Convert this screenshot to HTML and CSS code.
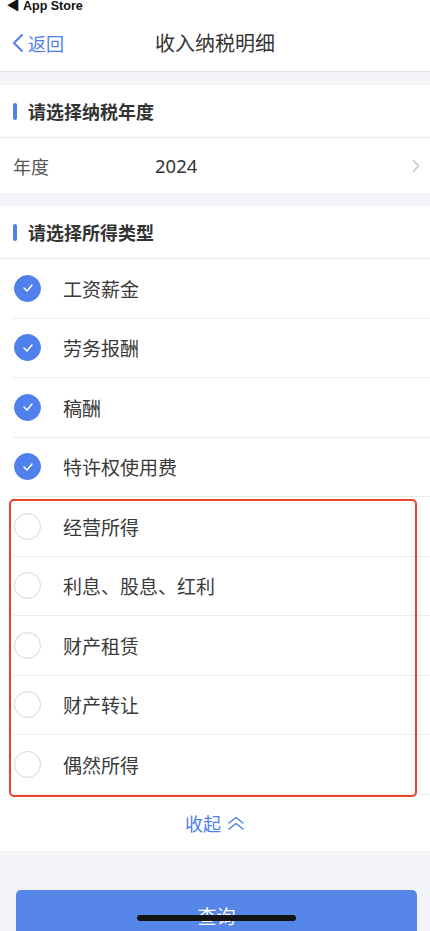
FILE: index.html
```html
<!DOCTYPE html>
<html lang="zh-CN">
<head>
<meta charset="utf-8">
<meta name="viewport" content="width=device-width, initial-scale=1.0">
<title>收入纳税明细</title>
<link rel="stylesheet" href="styles.css">
</head>
<body>
<div class="page">
  <div class="status">&#9664; App Store</div>

  <div class="nav">
    <a class="back">
      <svg width="12" height="20" viewBox="0 0 12 20"><path d="M10 2 L2 10 L10 18" fill="none" stroke="#4f80ec" stroke-width="2" stroke-linecap="round" stroke-linejoin="round"/></svg>
      <span>返回</span>
    </a>
    <div class="nav-title">收入纳税明细</div>
  </div>

  <div class="gap"></div>

  <div class="block">
    <div class="block-head"><i class="bar"></i>请选择纳税年度</div>
    <div class="year-row">
      <span class="year-label">年度</span>
      <span class="year-value">2024</span>
      <svg class="arrow" width="8" height="14" viewBox="0 0 8 14"><path d="M1.5 1.5 L6.5 7 L1.5 12.5" fill="none" stroke="#c9c9cc" stroke-width="1.6" stroke-linecap="round" stroke-linejoin="round"/></svg>
    </div>
  </div>

  <div class="gap"></div>

  <div class="block">
    <div class="block-head"><i class="bar"></i>请选择所得类型</div>
    <ul class="types">
      <li class="type on"><span class="check"><svg width="12" height="10" viewBox="0 0 12 10"><path d="M2 5 L5 8 L10 2" fill="none" stroke="#fff" stroke-width="1.5" stroke-linecap="round" stroke-linejoin="round"/></svg></span>工资薪金</li>
      <li class="type on"><span class="check"><svg width="12" height="10" viewBox="0 0 12 10"><path d="M2 5 L5 8 L10 2" fill="none" stroke="#fff" stroke-width="1.5" stroke-linecap="round" stroke-linejoin="round"/></svg></span>劳务报酬</li>
      <li class="type on"><span class="check"><svg width="12" height="10" viewBox="0 0 12 10"><path d="M2 5 L5 8 L10 2" fill="none" stroke="#fff" stroke-width="1.5" stroke-linecap="round" stroke-linejoin="round"/></svg></span>稿酬</li>
      <li class="type on"><span class="check"><svg width="12" height="10" viewBox="0 0 12 10"><path d="M2 5 L5 8 L10 2" fill="none" stroke="#fff" stroke-width="1.5" stroke-linecap="round" stroke-linejoin="round"/></svg></span>特许权使用费</li>
    </ul>
    <ul class="types marked">
      <li class="type"><span class="check"></span>经营所得</li>
      <li class="type"><span class="check"></span>利息、股息、红利</li>
      <li class="type"><span class="check"></span>财产租赁</li>
      <li class="type"><span class="check"></span>财产转让</li>
      <li class="type"><span class="check"></span>偶然所得</li>
    </ul>
    <div class="fold">收起
      <svg width="18" height="14" viewBox="0 0 18 14"><path d="M2 7 L9 1.5 L16 7 M2 13 L9 7.5 L16 13" fill="none" stroke="#4f80ec" stroke-width="1.5" stroke-linecap="round" stroke-linejoin="round"/></svg>
    </div>
  </div>

  <div class="footer">
    <button class="query">查询</button>
  </div>

  <div class="home-bar"></div>
</div>
</body>
</html>
```

FILE: styles.css
```css
* { margin: 0; padding: 0; box-sizing: border-box; list-style: none; }
html, body { height: 100%; }
body { font-family: "Noto Sans CJK SC", "Noto Sans", sans-serif; color: #333; background: #f3f4f8; overflow: hidden; }
.page { position: relative; height: 931px; overflow: hidden; }

.status { height: 14px; background: #fff; font-family: "Liberation Sans", Arial, sans-serif; font-size: 12.5px; font-weight: 700; line-height: 12px; padding-left: 7px; color: #111; }

.nav { height: 58px; background: #fff; border-bottom: 1px solid #e3e4e8; display: flex; align-items: center; justify-content: center; position: relative; }
.back { position: absolute; left: 12px; top: 0; bottom: 0; display: flex; align-items: center; gap: 4px; color: #4f80ec; font-size: 18px; }
.nav-title { font-size: 20px; color: #333; }

.gap { height: 13px; }

.block { background: #fff; }
.block-head { height: 53px; display: flex; align-items: center; font-size: 18px; font-weight: 700; color: #333; border-bottom: 1px solid #e8e9ec; padding-left: 13px; }
.bar { display: inline-block; width: 4px; height: 17px; border-radius: 2px; background: #4f80ec; margin-right: 11px; }

.year-row { height: 55px; display: flex; align-items: center; padding: 0 10px 0 13px; font-size: 18px; }
.year-label { width: 142px; color: #555; }
.year-value { flex: 1; color: #333; font-family: "Noto Sans", sans-serif; font-size: 18.5px; }
.arrow { margin-top: 1px; }

.types { padding-left: 13px; }
.type { height: 59.5px; display: flex; align-items: center; font-size: 19px; color: #3a3a3a; border-bottom: 1px solid #ececef; }
.check { width: 27px; height: 27px; border-radius: 50%; border: 1px solid #d5d6da; margin-left: 1px; margin-right: 22px; display: flex; align-items: center; justify-content: center; }
.on .check { background: #4f80ec; border-color: #4f80ec; }

.marked { position: relative; }
.marked::after { content: ""; position: absolute; left: 9px; right: 13px; top: 2px; bottom: -2px; border: 2.5px solid #e8432d; border-radius: 5px; pointer-events: none; }

.fold { height: 56px; display: flex; align-items: center; justify-content: center; gap: 6px; color: #4f80ec; font-size: 18px; }

.footer { padding: 39px 13px 0 16px; }
.query { width: 100%; height: 52px; border: 0; border-radius: 5px; background: #5586e8; color: #fff; font-family: inherit; font-size: 19px; }

.home-bar { position: absolute; left: 137px; top: 915px; width: 159px; height: 6px; border-radius: 3px; background: #141414; }
```
